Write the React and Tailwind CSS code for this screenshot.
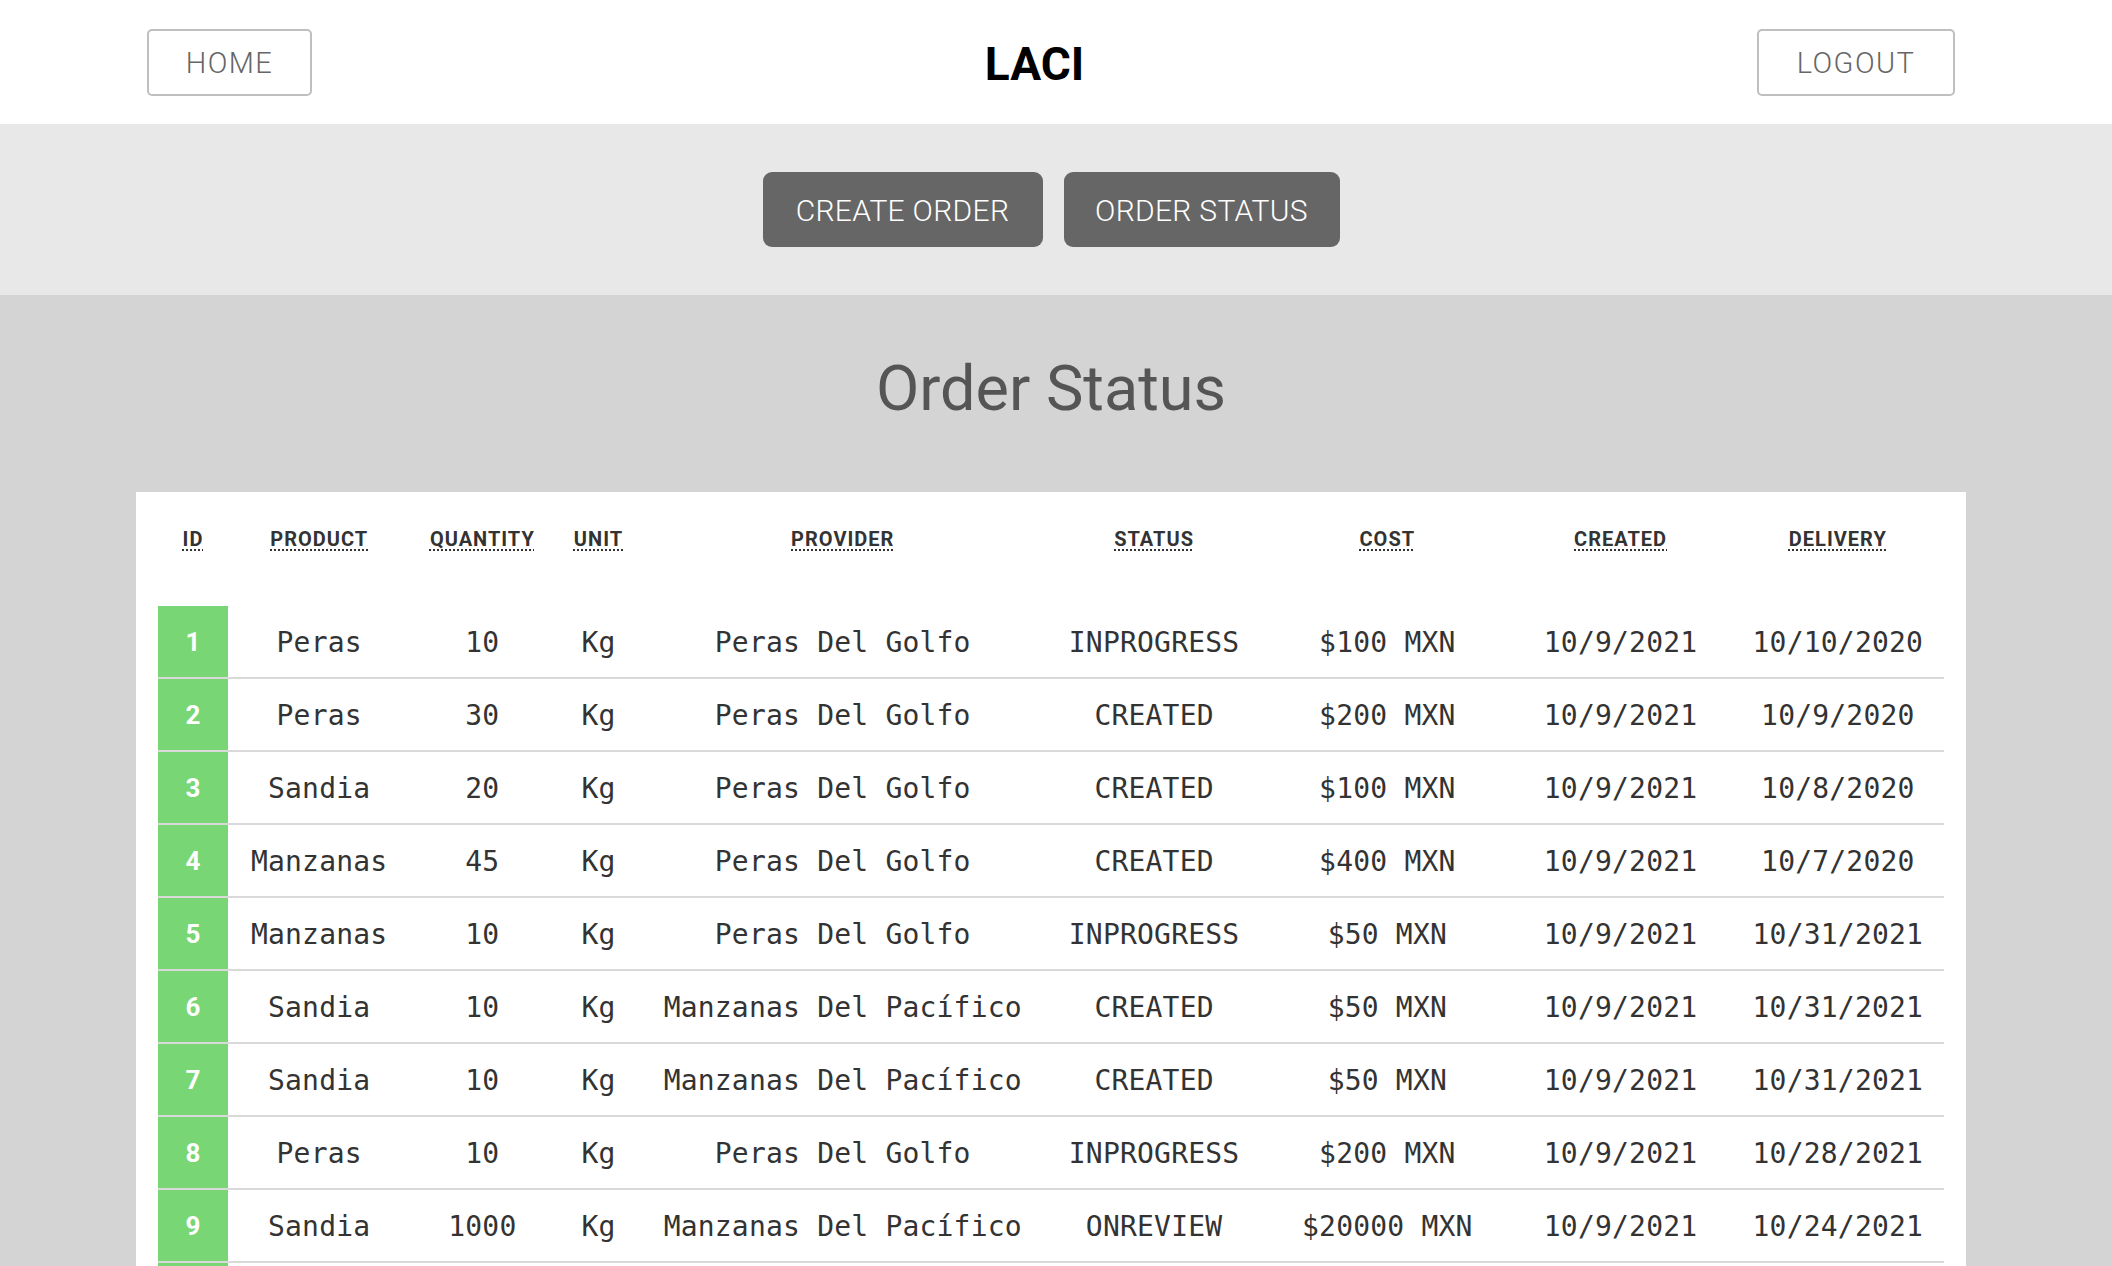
import React from "react";

const orders = [
  { id: 1, product: "Peras", quantity: 10, unit: "Kg", provider: "Peras Del Golfo", status: "INPROGRESS", cost: "$100 MXN", created: "10/9/2021", delivery: "10/10/2020" },
  { id: 2, product: "Peras", quantity: 30, unit: "Kg", provider: "Peras Del Golfo", status: "CREATED", cost: "$200 MXN", created: "10/9/2021", delivery: "10/9/2020" },
  { id: 3, product: "Sandia", quantity: 20, unit: "Kg", provider: "Peras Del Golfo", status: "CREATED", cost: "$100 MXN", created: "10/9/2021", delivery: "10/8/2020" },
  { id: 4, product: "Manzanas", quantity: 45, unit: "Kg", provider: "Peras Del Golfo", status: "CREATED", cost: "$400 MXN", created: "10/9/2021", delivery: "10/7/2020" },
  { id: 5, product: "Manzanas", quantity: 10, unit: "Kg", provider: "Peras Del Golfo", status: "INPROGRESS", cost: "$50 MXN", created: "10/9/2021", delivery: "10/31/2021" },
  { id: 6, product: "Sandia", quantity: 10, unit: "Kg", provider: "Manzanas Del Pacífico", status: "CREATED", cost: "$50 MXN", created: "10/9/2021", delivery: "10/31/2021" },
  { id: 7, product: "Sandia", quantity: 10, unit: "Kg", provider: "Manzanas Del Pacífico", status: "CREATED", cost: "$50 MXN", created: "10/9/2021", delivery: "10/31/2021" },
  { id: 8, product: "Peras", quantity: 10, unit: "Kg", provider: "Peras Del Golfo", status: "INPROGRESS", cost: "$200 MXN", created: "10/9/2021", delivery: "10/28/2021" },
  { id: 9, product: "Sandia", quantity: 1000, unit: "Kg", provider: "Manzanas Del Pacífico", status: "ONREVIEW", cost: "$20000 MXN", created: "10/9/2021", delivery: "10/24/2021" },
];

const columns = [
  { key: "id", label: "ID", width: "w-[70px]" },
  { key: "product", label: "PRODUCT", width: "w-[182px]" },
  { key: "quantity", label: "QUANTITY", width: "w-[144px]" },
  { key: "unit", label: "UNIT", width: "w-[88px]" },
  { key: "provider", label: "PROVIDER", width: "w-[400px]" },
  { key: "status", label: "STATUS", width: "w-[222px]" },
  { key: "cost", label: "COST", width: "w-[244px]" },
  { key: "created", label: "CREATED", width: "w-[222px]" },
  { key: "delivery", label: "DELIVERY", width: "w-[212px]" },
];

// outlined nav button in the top bar
const outlineButton =
  "h-[67px] pt-[3px] flex items-center justify-center border-2 border-[#bfbfbf] rounded-[5px] bg-white text-[#666] text-[29px] font-light tracking-[0.05em] whitespace-nowrap";

// dark filled tab buttons
const tabButton =
  "h-[75px] pt-[2px] flex items-center justify-center rounded-[9px] bg-[#666] text-white text-[30px] font-light tracking-[0.01em] whitespace-nowrap";

function Header() {
  return (
    <header className="bg-white h-[124px] pl-[147px] pr-[157px] flex items-center justify-between">
      <button className={`${outlineButton} w-[165px]`}>HOME</button>
      <h1 className="pt-[4px] text-[46px] font-bold text-black leading-none">LACI</h1>
      <button className={`${outlineButton} w-[198px]`}>LOGOUT</button>
    </header>
  );
}

function Tabs() {
  return (
    <nav className="bg-[#e8e8e8] h-[171px] pr-[10px] flex items-center justify-center gap-[21px]">
      <button className={`${tabButton} w-[280px]`}>CREATE ORDER</button>
      <button className={`${tabButton} w-[276px]`}>ORDER STATUS</button>
    </nav>
  );
}

function OrdersTable() {
  return (
    <div className="bg-white ml-[136px] mr-[146px] px-[22px] pt-[22px]">
      <table className="table-fixed w-[1786px] border-separate border-spacing-0">
        <thead>
          <tr>
            {columns.map((col) => (
              <th key={col.key} className={`${col.width} h-[50px] text-center align-middle font-bold text-[20px] tracking-[0.05em] text-[#333]`}>
                <abbr title={col.label} className="underline decoration-dotted decoration-[2px] underline-offset-[3px]">
                  {col.label}
                </abbr>
              </th>
            ))}
          </tr>
          <tr className="h-[42px]" />
        </thead>
        <tbody>
          {orders.map((o) => (
            <tr key={o.id}>
              <td className="h-[73px] pt-[2px] bg-[#78d674] border-b-2 border-[#d9d9d9] text-center text-white font-bold text-[26px]">
                {o.id}
              </td>
              {columns.slice(1).map((col) => (
                <td
                  key={col.key}
                  className="h-[73px] pt-[2px] border-b-2 border-[#d9d9d9] text-center text-[#333] text-[28px] whitespace-nowrap font-['DejaVu_Sans_Mono',monospace] tracking-[0.2px]"
                >
                  {o[col.key]}
                </td>
              ))}
            </tr>
          ))}
          {/* next row, cut off by the window edge */}
          <tr>
            <td className="h-[73px] bg-[#78d674]" />
            <td colSpan={8} className="h-[73px]" />
          </tr>
        </tbody>
      </table>
    </div>
  );
}

export default function App() {
  return (
    <div className="h-screen overflow-hidden bg-[#d4d4d4] font-['Roboto','Liberation_Sans',sans-serif]">
      <Header />
      <Tabs />
      <main>
        <div className="h-[197px] pr-[10px] pb-[10px] flex items-center justify-center">
          <h2 className="text-[63px] text-[#555] leading-none">Order Status</h2>
        </div>
        <OrdersTable />
      </main>
    </div>
  );
}
